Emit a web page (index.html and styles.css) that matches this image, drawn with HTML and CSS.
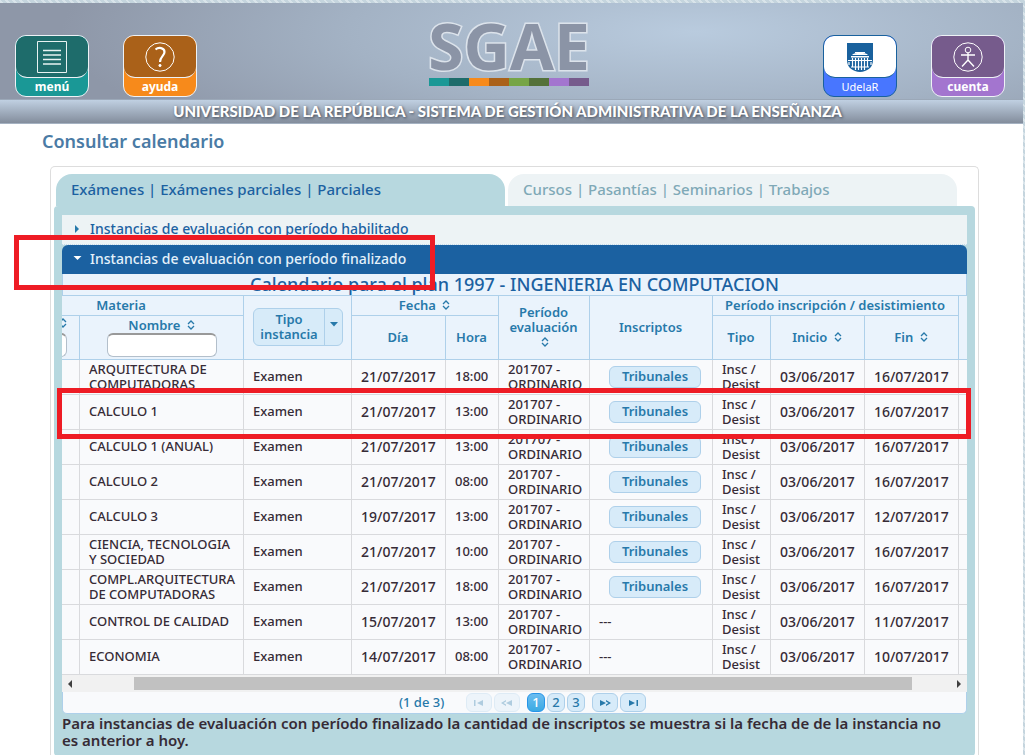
FILE: index.html
```html
<!DOCTYPE html>
<html lang="es">
<head>
<meta charset="utf-8">
<title>Consultar calendario</title>
<link rel="stylesheet" href="styles.css">
</head>
<body>
<div class="page">
  <header class="header">
    <nav class="badges">
      <a class="badge teal" href="#"><span class="badge-top"><svg width="30" height="32" viewBox="0 0 30 32" fill="none" stroke="#e8f2f2"><path d="M.5.5h29v31H.5z"/><path stroke-width="1.6" d="M6 9.500h18M6 14h18M6 18.500h18M6 23h18"/></svg></span><span class="badge-label">menú</span></a>
      <a class="badge orange" href="#"><span class="badge-top"><svg width="30" height="32" viewBox="0 0 30 32" fill="none" stroke="#fff"><circle cx="15" cy="16" r="14.200"/><path stroke-width="2.200" d="M10.500 8.500c3-2.500 9-2 9 2.500 0 4-4.500 4.500-4.500 10"/><circle cx="15" cy="24.500" r="1.100" fill="#fff"/></svg></span><span class="badge-label">ayuda</span></a>
    </nav>
    <div class="logo">
      <svg width="164" height="80" viewBox="0 0 164 80" role="img" aria-label="SGAE">
        <text class="logo-text" x="81" y="61" text-anchor="middle">SGAE</text>
        <g transform="translate(0 10)"><path fill="#1a9896" d="M1 59h20v8H1z"/><path fill="#1e6c6b" d="M21 59h20v8H21z"/><path fill="#f78a1b" d="M41 59h20v8H41z"/><path fill="#aa6119" d="M61 59h20v8H61z"/><path fill="#76a546" d="M81 59h20v8H81z"/><path fill="#54713a" d="M101 59h20v8h-20z"/><path fill="#a375cf" d="M121 59h20v8h-20z"/><path fill="#765b8c" d="M141 59h20v8h-20z"/></g>
      </svg>
    </div>
    <nav class="badges badges-right">
      <a class="badge blue" href="#"><span class="badge-top"><svg width="26" height="32" viewBox="0 0 26 32"><path fill="#19619d" d="M0 2h26v17c0 8-6 11.500-13 12C6 30.500 0 27 0 19z"/><path fill="#fff" d="M8 11h10v1H8zM5 14c2-3 14-3 16 0zM4 15h18v1.500H4zM1 19h24v1H1z"/><path stroke="#fff" stroke-width="1.200" d="M2 21v3M5.500 17v9M8.500 17v12M11.500 17v12M14.500 17v12M17.500 17v12M20.500 17v9M24 21v3M4 26h18"/></svg></span><span class="badge-label light">UdelaR</span></a>
      <a class="badge purple" href="#"><span class="badge-top"><svg width="30" height="32" viewBox="0 0 30 32" fill="none" stroke="#fff"><circle cx="15" cy="16" r="14.200"/><circle cx="15" cy="9" r="2.800"/><path stroke-width="1.400" d="M8 14h14M15 12v8M15 19l-6 6.500M15 19l6 6.500"/></svg></span><span class="badge-label">cuenta</span></a>
    </nav>
  </header>
  <div class="strap">UNIVERSIDAD DE LA REPÚBLICA - SISTEMA DE GESTIÓN ADMINISTRATIVA DE LA ENSEÑANZA</div>

  <main class="main">
    <h1 class="title">Consultar calendario</h1>
    <div class="frame">
      <div class="tabs" role="tablist">
        <button class="tab active" role="tab">Exámenes | Exámenes parciales | Parciales</button>
        <button class="tab" role="tab">Cursos | Pasantías | Seminarios | Trabajos</button>
      </div>
      <div class="panel">
        <button class="section"><svg width="5" height="8" viewBox="0 0 5 8"><path fill="#2779aa" d="M0 0l4 4-4 4z"/></svg>Instancias de evaluación con período habilitado</button>
        <div class="marked">
          <button class="section open"><svg width="8" height="5" viewBox="0 0 8 5"><path fill="#fff" d="M0 0h8L4 4z"/></svg>Instancias de evaluación con período finalizado</button>
          <span class="mark mark-section"></span>
        </div>
        <table class="grid">
          <caption>Calendario para el plan 1997 - INGENIERIA EN COMPUTACION</caption>
          <colgroup><col class="w18"><col class="w164"><col class="w108"><col class="w94"><col class="w53"><col class="w91"><col><col class="w58"><col class="w94"><col class="w94"><col class="w8"></colgroup>
          <thead>
            <tr class="head-top">
              <th colspan="2" class="subject">Materia</th>
              <th rowspan="2"><button class="split"><span class="split-text">Tipo instancia</span><span class="split-arrow"><svg width="8" height="5" viewBox="0 0 8 5"><path fill="#2779aa" d="M0 0h8L4 4.500z"/></svg></span></button></th>
              <th colspan="2">Fecha <svg class="sort" viewBox="0 0 8 10"><path d="M1 4l3-3 3 3M1 6l3 3 3-3"/></svg></th>
              <th rowspan="2">Período evaluación <svg class="sort" viewBox="0 0 8 10"><path d="M1 4l3-3 3 3M1 6l3 3 3-3"/></svg></th>
              <th rowspan="2">Inscriptos</th>
              <th colspan="3">Período inscripción / desistimiento</th>
              <th rowspan="2"></th>
            </tr>
            <tr class="head-sub">
              <th class="cut"><div class="cut-box"><svg class="sort" viewBox="0 0 8 10"><path d="M1 4l3-3 3 3M1 6l3 3 3-3"/></svg><input class="filter" aria-label="Código"></div></th>
              <th class="filtered"><label for="name">Nombre <svg class="sort" viewBox="0 0 8 10"><path d="M1 4l3-3 3 3M1 6l3 3 3-3"/></svg></label><input class="filter" id="name"></th>
              <th>Día</th><th>Hora</th><th>Tipo</th>
              <th>Inicio <svg class="sort" viewBox="0 0 8 10"><path d="M1 4l3-3 3 3M1 6l3 3 3-3"/></svg></th>
              <th>Fin <svg class="sort" viewBox="0 0 8 10"><path d="M1 4l3-3 3 3M1 6l3 3 3-3"/></svg></th>
            </tr>
          </thead>
          <tbody>
            <tr><td></td><td>ARQUITECTURA DE COMPUTADORAS</td><td>Examen</td><td class="when">21/07/2017</td><td>18:00</td><td>201707 - ORDINARIO</td><td class="act"><button class="btn">Tribunales</button></td><td>Insc / Desist</td><td class="when">03/06/2017</td><td class="when">16/07/2017</td><td></td></tr>
            <tr class="marked"><td><span class="mark mark-row"></span></td><td>CALCULO 1</td><td>Examen</td><td class="when">21/07/2017</td><td>13:00</td><td>201707 - ORDINARIO</td><td class="act"><button class="btn">Tribunales</button></td><td>Insc / Desist</td><td class="when">03/06/2017</td><td class="when">16/07/2017</td><td></td></tr>
            <tr><td></td><td>CALCULO 1 (ANUAL)</td><td>Examen</td><td class="when">21/07/2017</td><td>13:00</td><td>201707 - ORDINARIO</td><td class="act"><button class="btn">Tribunales</button></td><td>Insc / Desist</td><td class="when">03/06/2017</td><td class="when">16/07/2017</td><td></td></tr>
            <tr><td></td><td>CALCULO 2</td><td>Examen</td><td class="when">21/07/2017</td><td>08:00</td><td>201707 - ORDINARIO</td><td class="act"><button class="btn">Tribunales</button></td><td>Insc / Desist</td><td class="when">03/06/2017</td><td class="when">16/07/2017</td><td></td></tr>
            <tr><td></td><td>CALCULO 3</td><td>Examen</td><td class="when">19/07/2017</td><td>13:00</td><td>201707 - ORDINARIO</td><td class="act"><button class="btn">Tribunales</button></td><td>Insc / Desist</td><td class="when">03/06/2017</td><td class="when">12/07/2017</td><td></td></tr>
            <tr><td></td><td>CIENCIA, TECNOLOGIA Y SOCIEDAD</td><td>Examen</td><td class="when">21/07/2017</td><td>10:00</td><td>201707 - ORDINARIO</td><td class="act"><button class="btn">Tribunales</button></td><td>Insc / Desist</td><td class="when">03/06/2017</td><td class="when">16/07/2017</td><td></td></tr>
            <tr><td></td><td>COMPL.ARQUITECTURA DE COMPUTADORAS</td><td>Examen</td><td class="when">21/07/2017</td><td>18:00</td><td>201707 - ORDINARIO</td><td class="act"><button class="btn">Tribunales</button></td><td>Insc / Desist</td><td class="when">03/06/2017</td><td class="when">16/07/2017</td><td></td></tr>
            <tr><td></td><td>CONTROL DE CALIDAD</td><td>Examen</td><td class="when">15/07/2017</td><td>13:00</td><td>201707 - ORDINARIO</td><td>---</td><td>Insc / Desist</td><td class="when">03/06/2017</td><td class="when">11/07/2017</td><td></td></tr>
            <tr><td></td><td>ECONOMIA</td><td>Examen</td><td class="when">14/07/2017</td><td>08:00</td><td>201707 - ORDINARIO</td><td>---</td><td>Insc / Desist</td><td class="when">03/06/2017</td><td class="when">10/07/2017</td><td></td></tr>
          </tbody>
        </table>
        <div class="scroll"><svg width="4" height="8" viewBox="0 0 4 8"><path fill="#404040" d="M4 0v8L0 4z"/></svg><span class="track"><span class="thumb"></span></span><svg width="4" height="8" viewBox="0 0 4 8"><path fill="#404040" d="M0 0v8l4-4z"/></svg></div>
        <div class="pager">
          <span class="count">(1 de 3)</span>
          <div class="pages">
            <button class="page-btn wide" disabled aria-label="Primera"><svg width="10" height="6" viewBox="0 0 10 6"><path d="M0 0h1.500v6H0zM9 0v6L3 3z"/></svg></button>
            <button class="page-btn wide" disabled aria-label="Anterior"><svg width="12" height="6" viewBox="0 0 12 6"><path d="M11 0v6L5 3zM5 0L0 3l5 3V4.500L2.500 3 5 1.500z"/></svg></button>
          </div>
          <div class="pages">
            <button class="page-btn current">1</button><button class="page-btn">2</button><button class="page-btn">3</button>
          </div>
          <div class="pages">
            <button class="page-btn wide" aria-label="Siguiente"><svg width="12" height="6" viewBox="0 0 12 6"><path d="M1 0v6l6-3zM7 0l5 3-5 3V4.500L9.500 3 7 1.500z"/></svg></button>
            <button class="page-btn wide" aria-label="Última"><svg width="10" height="6" viewBox="0 0 10 6"><path d="M8.500 0H10v6H8.500zM1 0v6l6-3z"/></svg></button>
          </div>
        </div>
        <p class="note">Para instancias de evaluación con período finalizado la cantidad de inscriptos se muestra si la fecha de de la instancia no es anterior a hoy.</p>
      </div>
    </div>
  </main>
</div>
</body>
</html>
```
FILE: styles.css
```css
* { box-sizing: border-box; }
body {
  margin: 0;
  padding: 3px 2px 0 0;
  background: repeating-linear-gradient(45deg, #c5d5de 0 3px, #d9e4ea 3px 5px);
  font: 500 13px/15px "Noto Sans", "Open Sans", sans-serif;
  color: #362b36;
}
button, input { font: inherit; color: inherit; }
button { margin: 0; cursor: pointer; }
.page { background: #fff; }

.header {
  display: grid;
  grid-template-columns: 1fr auto 1fr;
  height: 96px;
  padding: 0 18px 0 15px;
  background: radial-gradient(ellipse 62% 150% at 68% 30%, #b9cbde 0%, #a3b2c4 55%, #8e97a8 100%);
}
.badges { display: flex; gap: 34px; padding-top: 32px; }
.badges-right { justify-content: flex-end; }
.badge {
  display: flex;
  flex-direction: column;
  width: 74px;
  height: 62px;
  border: 1px solid #eef2f6;
  border-radius: 11px;
  overflow: hidden;
  color: #fff;
  font-weight: 700;
  font-size: 12px;
  text-align: center;
  text-decoration: none;
}
.badge-top {
  display: flex;
  align-items: center;
  justify-content: center;
  height: 43px;
  border-bottom: 1px solid #eef2f6;
  border-radius: 9px 9px 11px 11px;
}
.badge-label { line-height: 18px; }
.badge-label.light { font-size: 11px; font-weight: 400; }
.teal { background: #1a9896; }
.teal .badge-top { background: #1e6c6b; }
.orange { background: #f78a1b; }
.orange .badge-top { background: #aa6119; }
.blue { background: #4876ff; border-color: #19619d; }
.blue .badge-top { background: #fff; border-color: #19619d; }
.purple { background: #a375cf; }
.purple .badge-top { background: #765b8c; }
.logo { padding-top: 6px; }
.logo svg { display: block; overflow: visible; }
.logo-text {
  font: 700 64px "Noto Sans", sans-serif;
  fill: #8b94a6;
  stroke: #dce3eb;
  stroke-width: 3;
  paint-order: stroke;
}
.strap {
  height: 25px;
  border-top: 1px solid #9ba8b8;
  border-bottom: 1px solid #a5b2c2;
  background: linear-gradient(#c0d0e2, #838d9c);
  color: #fff;
  font: 900 15px/23px Lato, sans-serif;
  text-align: center;
  text-shadow: 1px 1px 3px #3d4654;
  padding-right: 8px;
}

.main { padding: 8px 44px 0 42px; }
.title { margin: 0 0 16px; color: #4a7ba5; font-size: 18px; font-weight: 600; line-height: 18px; }
.frame {
  margin-left: 8px;
  padding: 7px 3px 0;
  border: 1px solid #ddd;
  border-bottom: 0;
  border-radius: 5px 5px 0 0;
}
.tabs { display: flex; gap: 3px; padding: 0 18px 0 2px; }
.tab {
  flex: 1;
  height: 32px;
  padding: 0 15px 1px;
  border: 0;
  border-radius: 16px 16px 0 0;
  background: #edf3f5;
  color: #7fa9b7;
  font-size: 15px;
  text-align: left;
}
.tab.active { background: #b7d8df; color: #1b61a1; }
.panel { padding: 9px 8px 7px; border-radius: 4px; background: #b7d8df; }

.section {
  display: flex;
  align-items: center;
  gap: 8px;
  width: 100%;
  height: 30px;
  padding: 0 12px 2px 11px;
  border: 0;
  border-bottom: 1px dotted #c5dbec;
  background: #edf3f5;
  color: #1b61a1;
  font-size: 14px;
  text-align: left;
}
.section svg { width: 9px; }
.section.open { height: 29px; border-bottom: 0; border-radius: 6px 6px 0 0; background: #1b61a1; color: #e4f1fb; }
.marked { position: relative; }
.mark { position: absolute; z-index: 2; border: 5px solid #ee1c25; pointer-events: none; }
.mark-section { top: -10px; bottom: -16px; left: -48px; width: 421px; }
.mark-row { top: -7px; bottom: -9px; left: -5px; right: -4px; }

.grid { width: 100%; table-layout: fixed; border-spacing: 0; background: #f9fafc; }
.grid caption {
  height: 22px;
  border: 1px solid #aed0ea;
  border-top: 0;
  background: #eaf3fc;
  color: #1b61a1;
  font-size: 18px;
  line-height: 21px;
}
.w8 { width: 8px; } .w18 { width: 18px; } .w53 { width: 53px; } .w58 { width: 58px; }
.w91 { width: 91px; } .w94 { width: 94px; } .w108 { width: 108px; } .w164 { width: 164px; }
.grid th {
  padding: 0 9px 0 8px;
  border-right: 1px solid #aed0ea;
  border-bottom: 1px solid #aed0ea;
  background: #eaf3fc;
  color: #2779aa;
  font-weight: 600;
}
.grid tr > :last-child:empty { border-right: 0; padding: 0; }
.head-top { height: 20px; }
.head-sub { height: 44px; }
.grid .subject { padding-right: 71px; }
.grid .filtered { padding: 0; }
.filtered label { display: block; }
.filter {
  display: block;
  width: 110px;
  height: 24px;
  margin: 0 auto;
  border: 1px solid #b3bfcb;
  border-top: 2px solid #999;
  border-radius: 6px;
  background: #fff;
}
.grid .cut { padding: 0; }
.cut-box { display: flex; flex-direction: column; align-items: flex-end; gap: 5px; padding-right: 12px; overflow: hidden; }
.cut-box .filter { flex: none; margin: 0; }
.cut-box .sort { margin: 0; }
.sort { width: 8px; height: 10px; margin-left: 3px; fill: none; stroke: #2779aa; stroke-width: 1.3; }
.split {
  display: flex;
  width: 90px;
  height: 38px;
  margin: 0 0 2px 1px;
  padding: 0;
  border: 1px solid #aed0ea;
  border-radius: 6px;
  background: #d7ebf9;
}
.split-text { flex: 1; align-self: center; }
.split-arrow { width: 18px; align-self: stretch; padding-top: 6px; border-left: 1px solid #aed0ea; }
.grid td { height: 35px; padding: 0 8px 1px 9px; border-right: 1px solid #d9dadd; border-bottom: 1px solid #d9dadd; }
.grid td:nth-child(5) { padding-right: 0; }
.grid td.act { padding-left: 19px; }
.grid td.when { font-size: 14px; }
.btn {
  display: block;
  width: 92px;
  height: 22px;
  padding: 0;
  border: 1px solid #aed0ea;
  border-radius: 6px;
  background: #d7ebf9;
  color: #2779aa;
  font-weight: 600;
}

.scroll { display: flex; align-items: center; gap: 10px; height: 17px; padding: 0 6px; background: #f1f1f1; }
.track { flex: 1; }
.thumb { display: block; width: 90%; height: 13px; margin-left: 6%; background: #c1c1c1; }
.pager {
  display: flex;
  align-items: center;
  gap: 7px;
  height: 22px;
  padding-left: 336px;
  border: 1px solid #aed0ea;
  border-top: 0;
  border-radius: 0 0 5px 5px;
  background: #f9fafc;
  color: #2779aa;
}
.count { width: 60px; }
.pages { display: flex; gap: 2px; }
.page-btn {
  display: flex;
  align-items: center;
  justify-content: center;
  width: 18px;
  height: 19px;
  padding: 0;
  border: 1px solid #aed0ea;
  border-radius: 6px;
  background: #d7ebf9;
}
.page-btn.wide { width: 26px; }
.page-btn svg { fill: #2779aa; }
.page-btn:disabled { opacity: .35; }
.page-btn.current { border-color: #2694e8; background: linear-gradient(#6cbdf0, #3baae3); color: #fff; }
.note { margin: 1px 0 0; padding-right: 10px; font-size: 15px; font-weight: 600; line-height: 17px; }
```
